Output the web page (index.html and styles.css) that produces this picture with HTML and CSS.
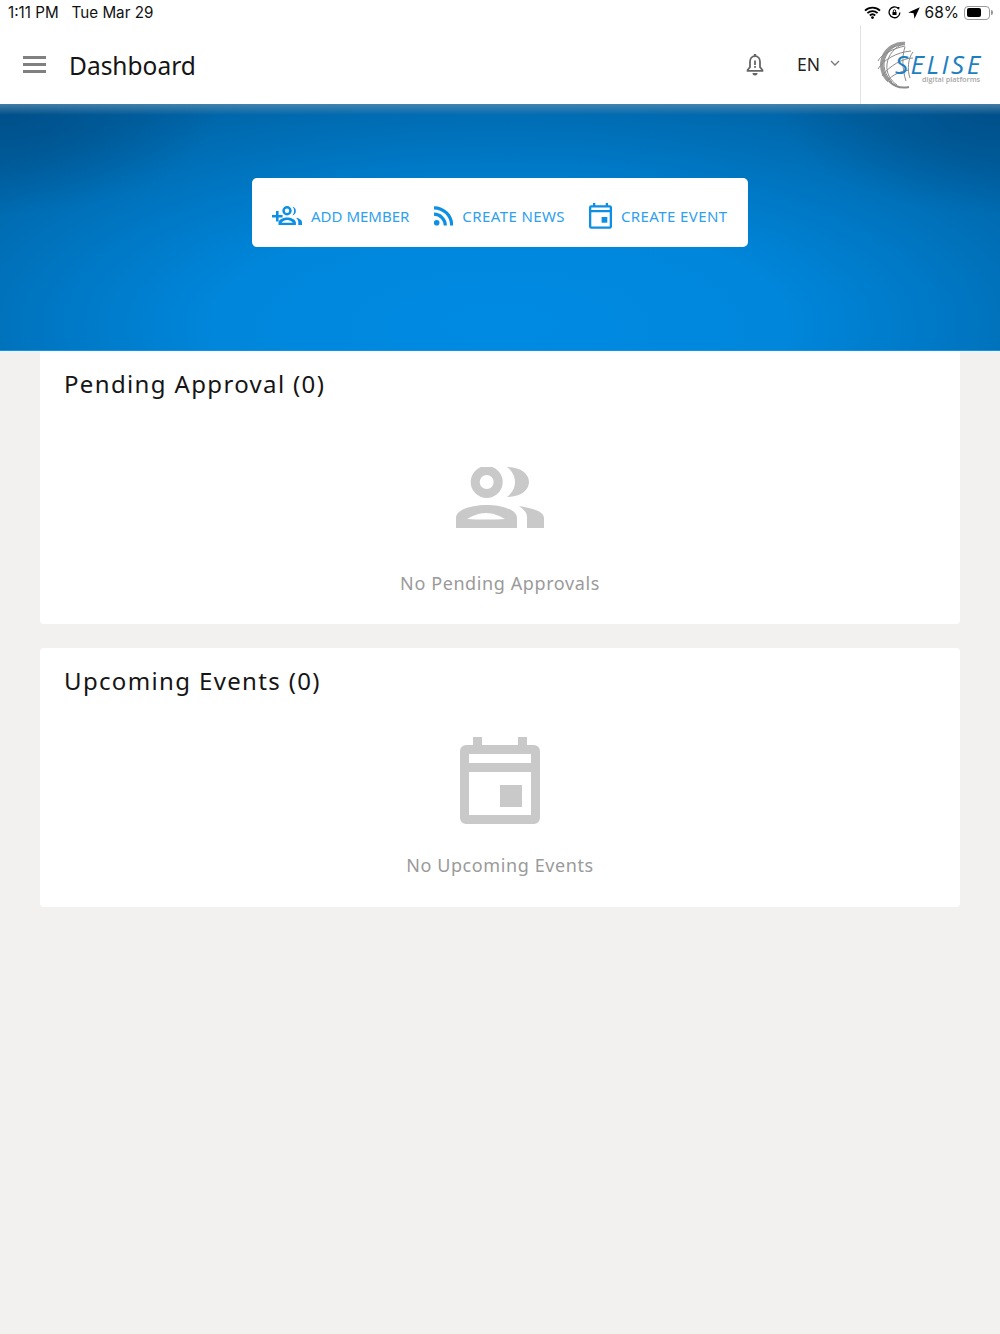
FILE: index.html
```html
<!DOCTYPE html>
<html lang="en">
<head>
  <meta charset="UTF-8">
  <title>Dashboard</title>
  <link rel="stylesheet" href="styles.css">
</head>
<body>

  <!-- Status bar -->
  <div class="status-bar">
    <div class="status-left">
      <span>1:11 PM</span>
      <span>Tue Mar 29</span>
    </div>
    <div class="status-right">
      <svg class="st-wifi" width="17" height="13" viewBox="0 0 17 13"><path d="M1 4.600a11 11 0 0 1 15 0M3.400 7.100a7.500 7.500 0 0 1 10.200 0M5.800 9.500a4 4 0 0 1 5.400 0" fill="none" stroke="#000" stroke-width="1.900"/><circle cx="8.500" cy="11.600" r="1.400"/></svg>
      <svg class="st-lock" width="13" height="13" viewBox="0 0 14 14"><path d="M11 2.600A5.800 5.800 0 1 0 12.800 7" fill="none" stroke="#000" stroke-width="1.400"/><path d="M9.600 1l2.800.2-.5 3z"/><rect x="4.800" y="6.400" width="4.400" height="3.400" rx=".5"/><path d="M5.700 6.400V5.400a1.300 1.300 0 0 1 2.600 0v1" fill="none" stroke="#000"/></svg>
      <svg class="st-loc" width="12" height="12" viewBox="0 0 12 12"><path d="M11.800.2L.2 5.400l5.400.9.900 5.500z"/></svg>
      <span>68%</span>
      <div class="battery"><div class="battery-level"></div></div>
      <div class="battery-tip"></div>
    </div>
  </div>

  <!-- Toolbar -->
  <header class="toolbar">
    <div class="menu-icon"><i></i><i></i><i></i></div>
    <h1>Dashboard</h1>
    <svg class="bell" width="20" height="24" viewBox="0 0 20 24">
      <path d="M10 3.200c-3.200 0-5 2.500-5 5.600v5.400l-2.400 2.800v.8h14.800V17L15 14.200V8.800c0-3.100-1.800-5.600-5-5.600z" fill="none" stroke="#666" stroke-width="1.800"/>
      <rect x="8.800" y="1" width="2.400" height="3" fill="#666"/>
      <rect x="9.100" y="7.500" width="1.800" height="4.500" fill="#666"/>
      <rect x="9.100" y="13" width="1.800" height="1.800" fill="#666"/>
      <path d="M7.500 20h5a2.500 2.500 0 0 1-5 0z" fill="#666"/>
    </svg>
    <div class="lang">
      <span>EN</span>
      <svg width="10" height="7" viewBox="0 0 10 7"><path d="M1 1l4 4 4-4" fill="none" stroke="#777" stroke-width="1.300"/></svg>
    </div>
    <div class="logo">
      <svg width="110" height="50" viewBox="0 0 110 50">
        <g fill="none" stroke="#8a8a8a" stroke-width="1" transform="translate(-2 0)">
          <path d="M30 3.500A21.500 21.500 0 0 0 14 41" stroke-width="3.500" stroke="#9a9a9a"/>
          <path d="M14 41a21.500 21.500 0 0 0 20 6" stroke-width="2"/>
          <path d="M28 4c-8 3-15 11-16 20s3 16 10 21"/>
          <path d="M20 6c-6 4-11 11-11 18s3 13 8 18"/>
          <path d="M30 6C20 8 6 14 3 21M36 11C22 12 8 20 3 29M38 18c-10 0-24 8-31 18M34 30c-8 1-17 5-22 11"/>
          <path d="M30 7c-3 8-3 22 1 34M38 12c-5 6-6 18-3 26"/>
        </g>
        <text x="18" y="34" class="logo-name">SELISE</text>
        <text x="45" y="41.500" class="logo-sub">digital platforms</text>
      </svg>
    </div>
  </header>

  <!-- Banner with quick actions -->
  <section class="banner">
    <div class="actions">
      <a class="action">
        <svg width="30" height="20" viewBox="0 0 30 20" fill="#0d8fe6">
          <path d="M0 9h4V5h2.600v4h4v2.500h-4v4H4v-4H0z"/>
          <path fill-rule="evenodd" d="M15 0a4.700 4.700 0 1 1 0 9.400A4.700 4.700 0 0 1 15 0zm0 2.500a2.200 2.200 0 1 0 0 4.400 2.200 2.200 0 0 0 0-4.400z"/>
          <path d="M20.500.4a4.700 4.700 0 0 1 0 9A7 7 0 0 0 20.500.4z"/>
          <path fill-rule="evenodd" d="M6.500 19v-2.600c0-3 5-5 8.700-5s8.700 2 8.700 5V19zm3-2.300h11.400c-1-1.700-3.600-2.800-5.700-2.800s-4.700 1.100-5.700 2.800z"/>
          <path d="M24 11.800c3 .5 6 2 6 4.600V19h-3.700v-2.600c0-1.800-1-3.400-2.300-4.600z"/>
        </svg>
        <span>ADD MEMBER</span>
      </a>
      <a class="action action-wide">
        <svg width="20" height="20" viewBox="-0.500 0 20 20" fill="none" stroke="#0d8fe6" stroke-width="3.200">
          <circle cx="3.200" cy="16.800" r="2.800" fill="#0d8fe6" stroke="none"/>
          <path d="M.5 8.200a11.300 11.300 0 0 1 11.300 11.300"/>
          <path d="M.5 1.800a17.700 17.700 0 0 1 17.700 17.700"/>
        </svg>
        <span>CREATE NEWS</span>
      </a>
      <a class="action action-wide">
        <svg width="23" height="26" viewBox="0 0 23 26" fill="#0d8fe6">
          <path fill-rule="evenodd" d="M4 0h2.300v2.300h10.400V0H19v2.300h1.700A2.300 2.300 0 0 1 23 4.600v18.800a2.300 2.300 0 0 1-2.300 2.300H2.300A2.300 2.300 0 0 1 0 23.400V4.600a2.300 2.300 0 0 1 2.300-2.300H4zM2.300 9.200v14.200h18.400V9.200zm0-4.600v2.300h18.400V4.600z"/>
          <rect x="12.600" y="14" width="5.700" height="5.700"/>
        </svg>
        <span>CREATE EVENT</span>
      </a>
    </div>
  </section>

  <main class="content">
    <section class="card card-pending">
      <h2>Pending Approval (0)</h2>
      <div class="empty empty-pending">
        <svg width="90" height="63" viewBox="0 0 90 63" fill="#c9c9c9">
          <path fill-rule="evenodd" d="M31.700-1a16 16 0 1 1 0 32 16 16 0 0 1 0-32zm0 9a7 7 0 1 0 0 14 7 7 0 0 0 0-14z"/>
          <path d="M52 0c14 0 22 7 22 15s-8 15-22 15c5-4 8-9 8-15S57 4 52 0z"/>
          <path fill-rule="evenodd" d="M1 61V51c0-9 17-13 30.500-13S62 42 62 51v10zm11-9c5 .4 12 .5 19 .5s13-.1 19-.5c-5-3-12-6-19-6s-14 3-19 6z"/>
          <path d="M64 39c12 2 25 5 25 12v10H72V50c0-5-4-8-8-11z"/>
        </svg>
        <p>No Pending Approvals</p>
      </div>
    </section>

    <section class="card card-events">
      <h2>Upcoming Events (0)</h2>
      <div class="empty empty-events">
        <svg width="80" height="88" viewBox="0 0 80 88" fill="#c9c9c9">
          <path fill-rule="evenodd" d="M13 0h9v8h36V0h9v8h7a6 6 0 0 1 6 6v67a6 6 0 0 1-6 6H6a6 6 0 0 1-6-6V14a6 6 0 0 1 6-6h7zM9 35v43h62V35zM9 17v9h62v-9z"/>
          <rect x="40" y="48" width="22" height="22"/>
        </svg>
        <p>No Upcoming Events</p>
      </div>
    </section>
  </main>

</body>
</html>
```

FILE: styles.css
```css
* {
  box-sizing: border-box;
}
html, body {
  height: 100%;
}
body {
  margin: 0;
  background-color: #f2f1ef;
  font-family: 'Noto Sans', sans-serif;
  color: #111;
  overflow: hidden;
}
.status-bar {
  height: 25px;
  background: white;
  display: flex;
  justify-content: space-between;
  align-items: center;
  padding: 0 7px 0 8px;
  font-family: 'Inter', sans-serif;
  font-size: 15.200px;
  color: #111;
}
.status-left {
  display: flex;
  gap: 13px;
}
.status-right {
  display: flex;
  align-items: center;
  font-size: 15.500px;
}
.st-wifi {
  margin-right: 7px;
}
.st-lock {
  margin-right: 7px;
}
.st-loc {
  margin-right: 5px;
}
.battery {
  width: 26px;
  height: 14px;
  border: 1px solid #999;
  border-radius: 4px;
  padding: 1.500px;
  margin-left: 5px;
}
.battery-level {
  width: 68%;
  height: 100%;
  background: #000;
  border-radius: 2px;
}
.battery-tip {
  width: 2px;
  height: 5px;
  background: #999;
  border-radius: 0 2px 2px 0;
  margin: 0 0 0 1px;
}
.toolbar {
  height: 79px;
  background: white;
  display: flex;
  align-items: center;
  padding-left: 23px;
}
.menu-icon {
  width: 23px;
  display: flex;
  flex-direction: column;
  gap: 4px;
}
.menu-icon i {
  display: block;
  height: 3px;
  background: #808080;
}
.toolbar h1 {
  margin: 2px 0 0 23px;
  font-size: 24.500px;
  font-weight: 400;
  flex: 1;
  color: #151515;
}
.bell {
  margin-right: 32px;
}
.lang {
  display: flex;
  align-items: center;
  gap: 10px;
  font-size: 17.500px;
  color: #222;
  width: 63px;
  margin-bottom: 2px;
}
.logo {
  align-self: stretch;
  width: 140px;
  border-left: 1px solid #e2e2e2;
  display: flex;
  align-items: center;
  padding-left: 16px;
}
.logo-name {
  font-family: 'Open Sans', sans-serif;
  font-size: 26px;
  font-style: italic;
  letter-spacing: 2.500px;
  fill: #1d7fc0;
}
.logo-sub {
  font-family: 'Open Sans', sans-serif;
  font-size: 7.300px;
  font-weight: 600;
  fill: #a6a6a6;
}
.banner {
  height: 247px;
  padding-top: 74px;
  display: flex;
  justify-content: center;
  align-items: flex-start;
  border-bottom: 1px solid #0d97ec;
  background:
    linear-gradient(to bottom, rgba(90, 140, 175, 0.75) 0, rgba(0, 90, 150, 0) 11px),
    radial-gradient(ellipse 22% 45% at 0 0, rgba(0, 60, 110, 0.55), rgba(0, 60, 110, 0)),
    radial-gradient(ellipse 22% 45% at 100% 0, rgba(0, 60, 110, 0.55), rgba(0, 60, 110, 0)),
    radial-gradient(ellipse 66% 100% at 50% 90%, #008ae2 0%, #0087dc 42%, #0064a6 100%);
}
.actions {
  width: 496px;
  height: 69px;
  background: white;
  border-radius: 5px;
  display: flex;
  gap: 24px;
  align-items: center;
  padding: 7px 0 0 20px;
}
.action {
  display: flex;
  align-items: center;
  gap: 9px;
  color: #2f9fee;
  font-size: 15px;
}
.action-wide {
  letter-spacing: 0.400px;
}
.content {
  padding: 0 40px;
  display: flex;
  flex-direction: column;
  gap: 24px;
}
.card {
  background: white;
  border-radius: 0 0 4px 4px;
  padding: 16px 24px 0;
}
.card-pending {
  height: 273px;
}
.card-events {
  height: 259px;
  border-radius: 4px;
}
.card h2 {
  margin: 0;
  font-size: 24px;
  line-height: 34px;
  font-weight: 400;
  letter-spacing: 1.350px;
  color: #151515;
}
.empty {
  display: flex;
  flex-direction: column;
  align-items: center;
}
.empty p {
  margin: 0;
  font-size: 18px;
  letter-spacing: 0.600px;
  color: #9a9a9a;
}
.empty-pending {
  padding-top: 66px;
}
.empty-pending p {
  margin-top: 41px;
}
.empty-events {
  padding-top: 39px;
}
.empty-events p {
  margin-top: 28px;
}
```
